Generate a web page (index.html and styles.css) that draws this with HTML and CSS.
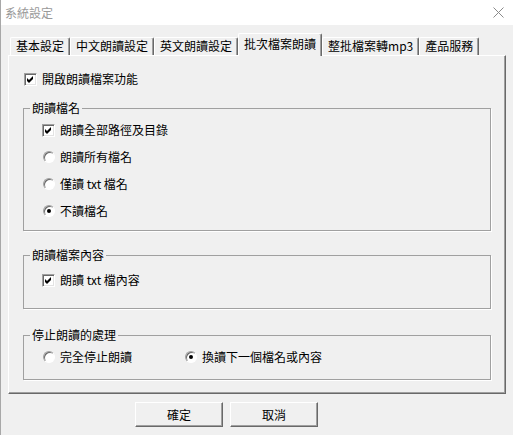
FILE: index.html
```html
<!DOCTYPE html>
<html lang="zh-Hant">
<head>
<meta charset="utf-8">
<title>系統設定</title>
<link rel="stylesheet" href="styles.css">
</head>
<body>
<div class="window">
  <div class="titlebar">
    <span class="title">系統設定</span>
    <svg class="close" width="11" height="11" viewBox="0 0 11 11"><path d="M0.5 0.5 L10.5 10.5 M10.5 0.5 L0.5 10.5" stroke="#8a8a8a" stroke-width="1" fill="none"/></svg>
  </div>

  <div class="tabs">
    <div class="tab">基本設定</div>
    <div class="tab">中文朗讀設定</div>
    <div class="tab">英文朗讀設定</div>
    <div class="tab active">批次檔案朗讀</div>
    <div class="tab">整批檔案轉mp3</div>
    <div class="tab">產品服務</div>
  </div>

  <div class="panel">
    <label class="row top-row"><span class="chk"><svg width="11" height="11" viewBox="0 0 11 11"><polygon points="2,4 4,6 8,2 8,5 4,9 2,7" fill="#000"/></svg></span>開啟朗讀檔案功能</label>

    <fieldset class="group g1">
      <legend>朗讀檔名</legend>
      <div class="group-body body1">
        <label class="row"><span class="chk"><svg width="11" height="11" viewBox="0 0 11 11"><polygon points="2,4 4,6 8,2 8,5 4,9 2,7" fill="#000"/></svg></span>朗讀全部路徑及目錄</label>
        <label class="row"><span class="rad"></span>朗讀所有檔名</label>
        <label class="row"><span class="rad"></span>僅讀 txt 檔名</label>
        <label class="row"><span class="rad on"><span class="dot"></span></span>不讀檔名</label>
      </div>
    </fieldset>

    <fieldset class="group g2">
      <legend>朗讀檔案內容</legend>
      <div class="group-body body2">
        <label class="row"><span class="chk"><svg width="11" height="11" viewBox="0 0 11 11"><polygon points="2,4 4,6 8,2 8,5 4,9 2,7" fill="#000"/></svg></span>朗讀 txt 檔內容</label>
      </div>
    </fieldset>

    <fieldset class="group g3">
      <legend>停止朗讀的處理</legend>
      <div class="group-body body3">
        <label class="row opt1"><span class="rad"></span>完全停止朗讀</label>
        <label class="row"><span class="rad on"><span class="dot"></span></span>換讀下一個檔名或內容</label>
      </div>
    </fieldset>
  </div>

  <div class="buttons">
    <button class="btn">確定</button>
    <button class="btn">取消</button>
  </div>
</div>
</body>
</html>
```

FILE: styles.css
```css
html, body {
  margin: 0;
  padding: 0;
}
body {
  width: 513px;
  height: 435px;
  overflow: hidden;
  background: #f0f0f0;
  font-family: "Noto Sans CJK TC", "Noto Sans", sans-serif;
  font-size: 12px;
  color: #000;
}
.window {
  height: 435px;
  border-left: 1px solid #a8a8a8;
  box-sizing: border-box;
}
.titlebar {
  height: 25px;
  background: #fff;
  display: flex;
  align-items: center;
  justify-content: space-between;
  padding: 0 9px 0 4px;
}
.title {
  color: #999;
  line-height: 16px;
}
.close {
  display: block;
}
.tabs {
  display: flex;
  align-items: flex-end;
  height: 22px;
  margin: 8px 0 0 7px;
  padding-left: 2px;
}
.tab {
  box-sizing: border-box;
  height: 18px;
  padding: 0 5px;
  line-height: 16px;
  border-top: 1px solid #fff;
  border-left: 1px solid #fff;
  border-right: 1px solid #696969;
  box-shadow: inset -1px 0 0 #a0a0a0;
  border-radius: 2px 2px 0 0;
  white-space: nowrap;
}
.tab.active {
  position: relative;
  z-index: 1;
  height: 23px;
  margin-bottom: -1px;
  padding-top: 2px;
  background: #f0f0f0;
}
.panel {
  box-sizing: border-box;
  width: 498px;
  height: 339px;
  margin-left: 7px;
  border: 1px solid;
  border-color: #fff #696969 #696969 #fff;
  box-shadow: inset -1px -1px 0 #a0a0a0;
  padding: 15px 14px 0 14px;
}
.row {
  display: flex;
  align-items: center;
  height: 16px;
  line-height: 16px;
  gap: 5px;
  white-space: nowrap;
}
.top-row {
  margin-left: 1px;
}
.chk {
  box-sizing: border-box;
  width: 13px;
  height: 13px;
  flex: none;
  background: #fff;
  border: 1px solid;
  border-color: #a0a0a0 #fff #fff #a0a0a0;
  box-shadow: inset 1px 1px 0 #696969, inset -1px -1px 0 #e3e3e3;
}
.chk svg {
  display: block;
}
.rad {
  box-sizing: border-box;
  width: 12px;
  height: 12px;
  flex: none;
  margin-left: 1px;
  border-radius: 50%;
  background: #fff;
  border: 1px solid;
  border-color: #a0a0a0 #fff #fff #a0a0a0;
  box-shadow: inset 1px 1px 0 #696969;
  display: flex;
  align-items: center;
  justify-content: center;
}
.dot {
  width: 4px;
  height: 4px;
  border-radius: 50%;
  background: #000;
}
.group {
  margin: 0;
  padding: 0;
  min-width: 0;
  border: 1px solid #a0a0a0;
  box-shadow: 1px 1px 0 #fff;
}
.group legend {
  padding: 0 2px;
  margin-left: 6px;
  line-height: 16px;
}
.g1 { margin-top: 13px; }
.g2 { margin-top: 16px; }
.g3 { margin-top: 18px; }
.group-body {
  padding-left: 18px;
}
.body1 {
  display: flex;
  flex-direction: column;
  gap: 11px;
  padding-top: 6px;
  padding-bottom: 11px;
}
.body2 {
  padding-top: 9px;
  padding-bottom: 20px;
}
.body3 {
  display: grid;
  grid-template-columns: 142px auto;
  padding-top: 6px;
  padding-bottom: 14px;
}
.buttons {
  display: flex;
  gap: 7px;
  margin: 8px 0 0 134px;
}
.btn {
  box-sizing: border-box;
  width: 88px;
  height: 25px;
  margin: 0;
  padding: 0;
  font: inherit;
  color: #000;
  background: #f0f0f0;
  border: 1px solid;
  border-color: #fff #696969 #696969 #fff;
  box-shadow: inset -1px -1px 0 #a0a0a0;
}
```
